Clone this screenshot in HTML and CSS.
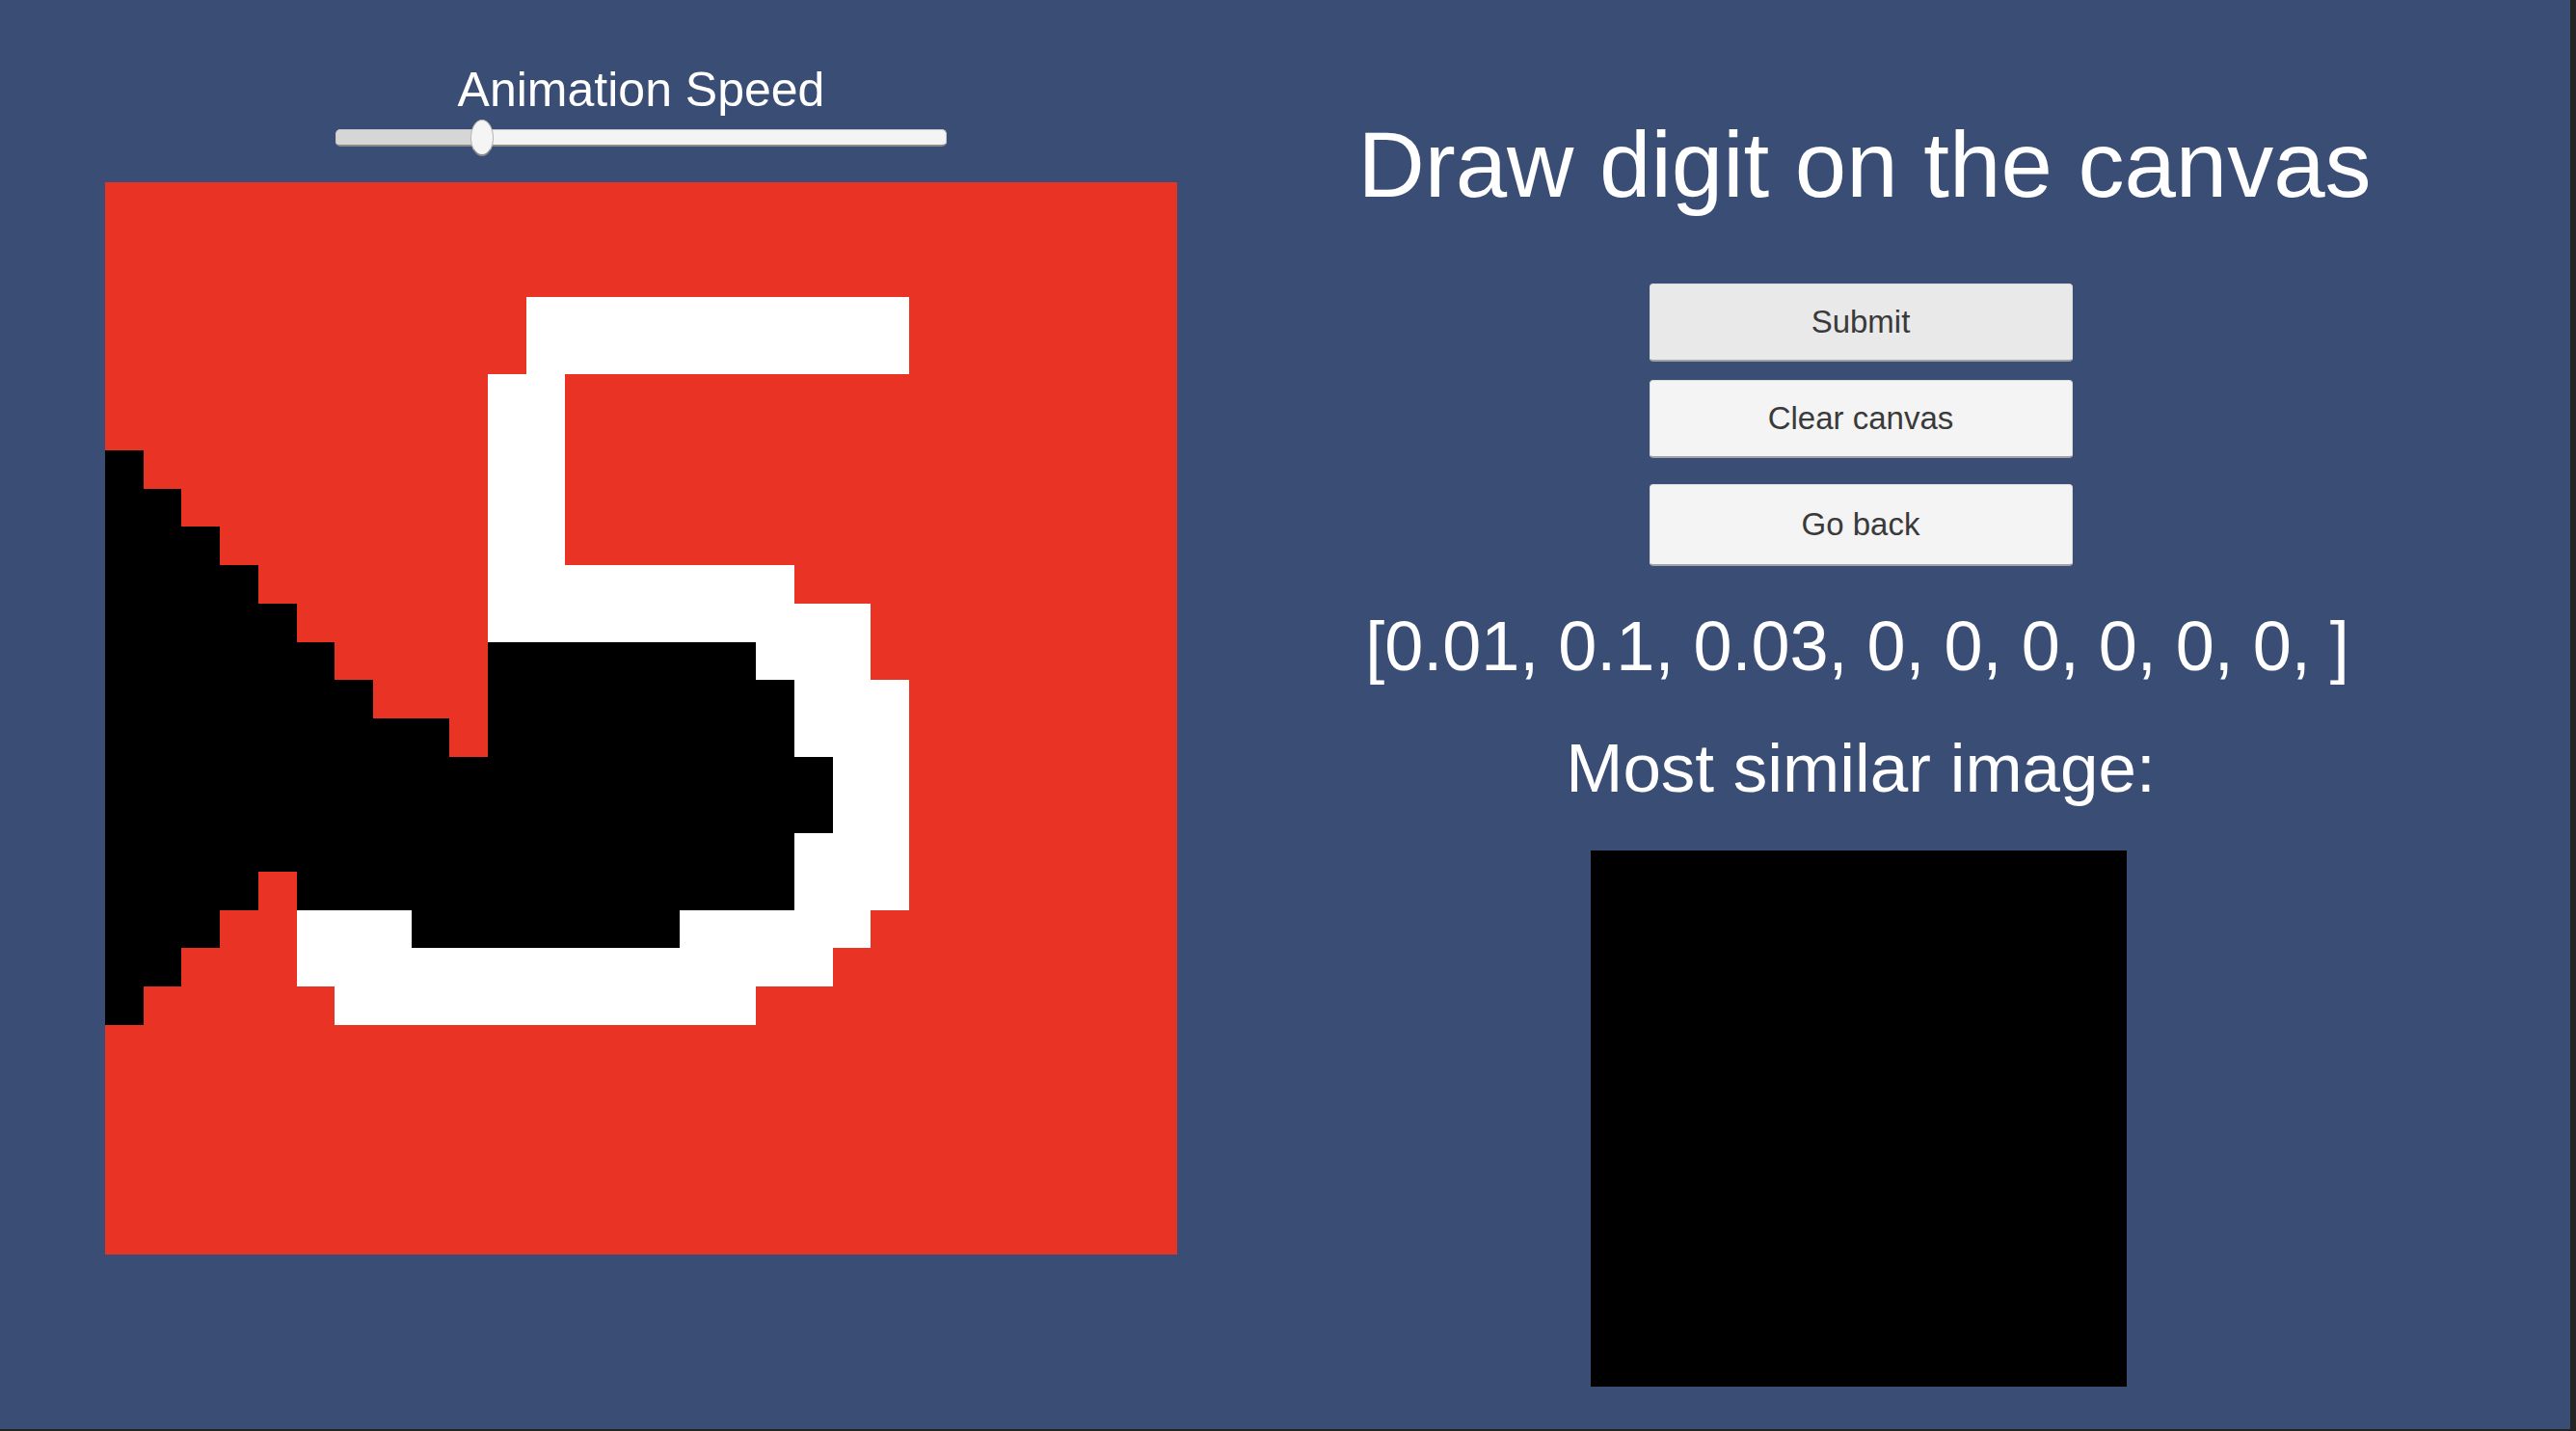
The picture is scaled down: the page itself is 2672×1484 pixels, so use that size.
FILE: index.html
```html
<!DOCTYPE html>
<html lang="en">
<head>
<meta charset="utf-8">
<title>Draw digit</title>
<link rel="stylesheet" href="styles.css">
</head>
<body>
<div class="screen">
  <section class="left">
    <div class="speed-label">Animation Speed</div>
    <div class="slider">
      <div class="track">
        <div class="track-fill"></div>
      </div>
      <div class="handle"></div>
    </div>
    <svg class="canvas" viewBox="0 0 28 28" shape-rendering="crispEdges" xmlns="http://www.w3.org/2000/svg">
      <rect x="0" y="0" width="28" height="28" fill="#e93324"/>
      <g fill="#ffffff">
        <rect x="11" y="3" width="10" height="2"/>
        <rect x="10" y="5" width="2" height="5"/>
        <rect x="10" y="10" width="8" height="1"/>
        <rect x="10" y="11" width="10" height="1"/>
        <rect x="17" y="12" width="3" height="1"/>
        <rect x="18" y="13" width="3" height="2"/>
        <rect x="19" y="15" width="2" height="2"/>
        <rect x="18" y="17" width="3" height="2"/>
        <rect x="5" y="19" width="3" height="1"/>
        <rect x="15" y="19" width="5" height="1"/>
        <rect x="5" y="20" width="14" height="1"/>
        <rect x="6" y="21" width="11" height="1"/>
      </g>
      <g fill="#000000">
        <rect x="0" y="7" width="1" height="1"/>
        <rect x="0" y="8" width="2" height="1"/>
        <rect x="0" y="9" width="3" height="1"/>
        <rect x="0" y="10" width="4" height="1"/>
        <rect x="0" y="11" width="5" height="1"/>
        <rect x="0" y="12" width="6" height="1"/>
        <rect x="10" y="12" width="7" height="1"/>
        <rect x="0" y="13" width="7" height="1"/>
        <rect x="10" y="13" width="8" height="1"/>
        <rect x="0" y="14" width="9" height="1"/>
        <rect x="10" y="14" width="8" height="1"/>
        <rect x="0" y="15" width="19" height="2"/>
        <rect x="0" y="17" width="18" height="1"/>
        <rect x="0" y="18" width="4" height="1"/>
        <rect x="5" y="18" width="13" height="1"/>
        <rect x="0" y="19" width="3" height="1"/>
        <rect x="8" y="19" width="7" height="1"/>
        <rect x="0" y="20" width="2" height="1"/>
        <rect x="0" y="21" width="1" height="1"/>
      </g>
    </svg>
  </section>
  <section class="right">
    <h1 class="title">Draw digit on the canvas</h1>
    <div class="buttons">
      <button class="btn btn-hover">Submit</button>
      <button class="btn btn-clear">Clear canvas</button>
      <button class="btn btn-back">Go back</button>
    </div>
    <div class="result">[0.01, 0.1, 0.03, 0, 0, 0, 0, 0, 0, ]</div>
    <div class="similar-label">Most similar image:</div>
    <div class="similar-image"></div>
  </section>
</div>
</body>
</html>
```
FILE: styles.css
```css
html, body {
  margin: 0;
  padding: 0;
  background: #232323;
}

body {
  width: 2672px;
  height: 1484px;
  overflow: hidden;
  font-family: "Liberation Sans", Arial, sans-serif;
}

.screen {
  width: 2666px;
  height: 1482px;
  background: #3a4d75;
  display: flex;
  flex-direction: row;
  align-items: flex-start;
}

.left {
  margin-left: 109px;
  width: 1112px;
  padding-top: 65px;
  display: flex;
  flex-direction: column;
  align-items: center;
}

.speed-label {
  color: #ffffff;
  font-size: 50px;
  line-height: 57px;
  height: 57px;
}

.slider {
  position: relative;
  margin-top: 2px;
  width: 634px;
  height: 38px;
  display: flex;
  align-items: center;
}

.track {
  width: 634px;
  height: 18px;
  box-sizing: border-box;
  background: #f4f4f4;
  border-radius: 5px;
  border: 1px solid #c9c9c9;
  border-bottom: 2px solid #8a8a8a;
  overflow: hidden;
}

.track-fill {
  width: 150px;
  height: 100%;
  background: #d6d6d6;
}

.handle {
  position: absolute;
  left: 140px;
  top: 0;
  width: 24px;
  height: 38px;
  box-sizing: border-box;
  border-radius: 50%;
  background: #f5f5f5;
  border: 1px solid #b5b5b5;
  border-bottom: 2px solid #8a8a8a;
}

.canvas {
  display: block;
  margin-top: 27px;
  width: 1112px;
  height: 1112px;
}

.right {
  width: 1418px;
  padding-top: 116px;
  display: flex;
  flex-direction: column;
  align-items: center;
}

.title {
  margin: 0 0 0 8px;
  color: #ffffff;
  font-weight: normal;
  font-size: 96px;
  line-height: 110px;
  height: 110px;
  white-space: nowrap;
}

.buttons {
  margin-top: 68px;
  display: flex;
  flex-direction: column;
  align-items: center;
}

.btn {
  display: block;
  width: 439px;
  height: 81px;
  padding: 0;
  box-sizing: border-box;
  font-family: "Liberation Sans", Arial, sans-serif;
  font-size: 33px;
  color: #3a3a3a;
  background: #f4f4f4;
  border: 1px solid #dcdcdc;
  border-bottom: 2px solid #a3a3a3;
  border-radius: 4px;
}

.btn-hover {
  background: #e9e9e9;
}

.btn-clear {
  margin-top: 19px;
}

.btn-back {
  margin-top: 27px;
  height: 85px;
}

.result {
  margin: 42px 7px 0 0;
  color: #ffffff;
  font-size: 72px;
  line-height: 83px;
  height: 83px;
  white-space: nowrap;
}

.similar-label {
  margin-top: 44px;
  color: #ffffff;
  font-size: 71px;
  line-height: 82px;
  height: 82px;
  white-space: nowrap;
}

.similar-image {
  margin: 44px 4px 0 0;
  width: 556px;
  height: 556px;
  background: #000000;
}
```
